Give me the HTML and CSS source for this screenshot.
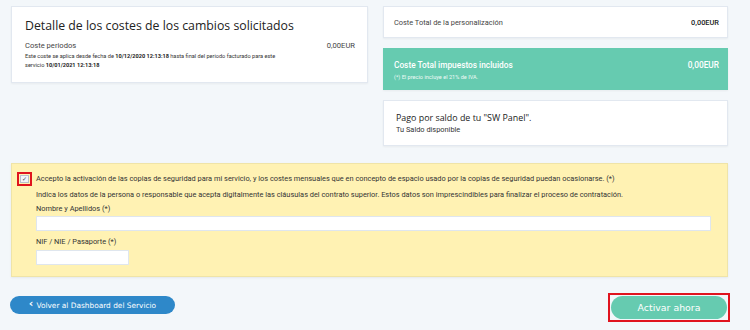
FILE: index.html
```html
<!DOCTYPE html>
<html lang="es">
<head>
<meta charset="utf-8">
<link rel="stylesheet" href="styles.css">
</head>
<body>
<div class="page">
  <div class="top">
    <div class="card detail">
      <h1 class="title">Detalle de los costes de los cambios solicitados</h1>
      <div class="row">
        <span>Coste periodos</span>
        <span>0,00EUR</span>
      </div>
      <p class="note">Este coste se aplica desde fecha de <b>10/12/2020 12:13:18</b> hasta final del periodo facturado para este servicio <b>10/01/2021 12:13:18</b></p>
    </div>
    <div class="side">
      <div class="card total">
        <span>Coste Total de la personalización</span>
        <span class="amount">0,00EUR</span>
      </div>
      <div class="card teal">
        <div class="row teal-row">
          <span>Coste Total impuestos incluidos</span>
          <span>0,00EUR</span>
        </div>
        <div class="iva">(*) El precio incluye el 21% de IVA.</div>
      </div>
      <div class="card pay">
        <div class="pay-title">Pago por saldo de tu "SW Panel".</div>
        <div class="pay-sub">Tu Saldo disponible</div>
      </div>
    </div>
  </div>

  <div class="accept">
    <div class="accept-line">
      <span class="check-frame"><span class="check">&#10003;</span></span>
      <span>Accepto la activación de las copias de seguridad para mi servicio, y los costes mensuales que en concepto de espacio usado por la copias de seguridad puedan ocasionarse. (*)</span>
    </div>
    <div class="fields">
      <p class="info">Indica los datos de la persona o responsable que acepta digitalmente las cláusulas del contrato superior. Estos datos son imprescindibles para finalizar el proceso de contratación.</p>
      <label class="lbl">Nombre y Apellidos (*)</label>
      <div class="input wide"></div>
      <label class="lbl lbl2">NIF / NIE / Pasaporte (*)</label>
      <div class="input short"></div>
    </div>
  </div>

  <div class="actions">
    <button class="back"><span class="chev">&#8249;</span> Volver al Dashboard del Servicio</button>
    <span class="activate-frame"><button class="activate">Activar ahora</button></span>
  </div>
</div>
</body>
</html>
```

FILE: styles.css
```css
* { box-sizing: border-box; }
html, body { margin: 0; padding: 0; }
body {
  background: #f3f7fa;
  font-family: Roboto, "Liberation Sans", sans-serif;
  color: #333;
  width: 750px;
  height: 330px;
  overflow: hidden;
}
.page {
  width: 717px;
  margin-left: 11px;
  padding-top: 6px;
}
.top {
  display: grid;
  grid-template-columns: 357px 345px;
  column-gap: 15px;
  align-items: start;
}
.card {
  background: #fff;
  border: 1px solid #e2e8f0;
  box-shadow: 0 1px 2px rgba(0,0,0,0.05);
}
.detail {
  height: 77px;
  padding: 10px 12px 0 13px;
}
.title {
  margin: 0;
  font-family: "Open Sans", sans-serif;
  font-weight: 400;
  font-size: 12.3px;
  line-height: 18px;
  color: #222;
}
.row {
  display: flex;
  justify-content: space-between;
  align-items: center;
}
.detail .row {
  margin-top: 6px;
  font-size: 7.6px;
  line-height: 10px;
  color: #444;
}
.note {
  margin: 1px 0 0;
  font-size: 5.6px;
  line-height: 9px;
  color: #333;
  width: 270px;
}
.note b { font-weight: 700; color: #222; }
.side {
  display: flex;
  flex-direction: column;
  gap: 10px;
}
.total {
  height: 32px;
  display: flex;
  justify-content: space-between;
  align-items: center;
  padding: 0 8px 0 10px;
  font-size: 7.4px;
  color: #444;
}
.total .amount { color: #222; font-weight: 500; }
.teal {
  background: #66cbb0;
  border-color: #66cbb0;
  height: 42px;
  padding: 9px 8px 0 10px;
  color: #fff;
}
.teal-row {
  font-size: 8.3px;
  line-height: 14px;
  font-weight: 500;
}
.iva {
  font-size: 5.6px;
  line-height: 10px;
  color: #eefaf6;
}
.pay {
  height: 46px;
  padding: 10px 8px 0 12px;
}
.pay-title {
  font-family: "Open Sans", sans-serif;
  font-size: 8.9px;
  line-height: 13px;
  color: #222;
}
.pay-sub {
  font-size: 7.4px;
  line-height: 12px;
  color: #333;
}
.accept {
  margin-top: 17px;
  height: 114px;
  background: #fff2b3;
  border: 1px solid #efe4a8;
  box-shadow: 0 1px 2px rgba(0,0,0,0.06);
  padding: 8px 0 0 5px;
  font-size: 7.4px;
  color: #333;
}
.accept-line {
  display: flex;
  align-items: center;
  gap: 4px;
  line-height: 14px;
}
.check-frame {
  width: 15px;
  height: 14px;
  border: 2px solid #e0141e;
  display: flex;
  align-items: center;
  justify-content: center;
  flex: none;
}
.check {
  width: 9px;
  height: 8px;
  background: #f2f4f8;
  border: 1px solid #b8c0cc;
  font-size: 6px;
  line-height: 6px;
  text-align: center;
  color: #445;
}
.fields {
  padding-left: 19px;
  padding-right: 16px;
}
.info {
  margin: 2px 0 0;
  line-height: 14px;
}
.lbl {
  display: block;
  line-height: 12px;
  margin-top: 1px;
}
.lbl2 { margin-top: 5px; }
.input {
  background: #fff;
  border: 1px solid #dfe6ee;
  height: 15px;
  margin-top: 1px;
}
.short { width: 93px; margin-top: 2px; }
.actions {
  margin-top: 16px;
  display: flex;
  justify-content: space-between;
  align-items: flex-start;
}
.back {
  margin-left: -1px;
  margin-top: 3px;
  width: 165px;
  height: 18px;
  border: none;
  border-radius: 9px;
  background: #2e88c9;
  color: #fff;
  font-family: "DejaVu Sans", Verdana, sans-serif;
  font-size: 7.4px;
  padding: 0;
  display: flex;
  align-items: center;
  justify-content: center;
  gap: 3px;
}
.chev {
  font-size: 11px;
  font-weight: 700;
  line-height: 8px;
  margin-top: -2px;
}
.activate-frame {
  border: 2px solid #e0141e;
  padding: 1px;
  display: flex;
  margin-right: -2px;
}
.activate {
  width: 116px;
  height: 23px;
  border: none;
  border-radius: 12px;
  background: #66cbb0;
  color: #fff;
  font-family: "DejaVu Sans", Verdana, sans-serif;
  font-size: 9.4px;
  padding: 0;
}
```
